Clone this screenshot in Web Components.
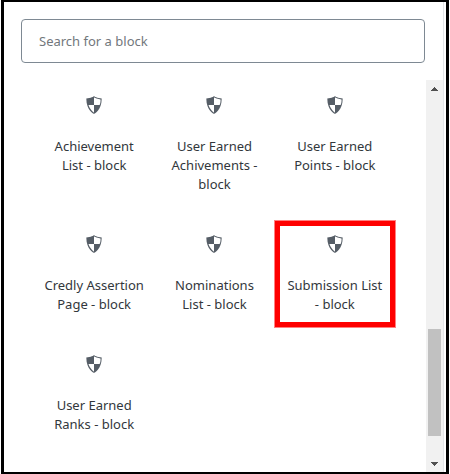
<!DOCTYPE html>
<html lang="en">
<head>
<meta charset="utf-8">
<title>Block inserter</title>
<style>
  html, body { height: 100%; margin: 0; }
  body { background: #fff; color: #32373c; font: 13px/19px "Noto Sans", "Open Sans", sans-serif; }
</style>
</head>
<body>
<inserter-panel>
  <block-search slot="search"></block-search>
  <block-item>Achievement<br>List - block</block-item>
  <block-item>User Earned<br>Achivements -<br>block</block-item>
  <block-item>User Earned<br>Points - block</block-item>
  <block-item>Credly Assertion<br>Page - block</block-item>
  <block-item>Nominations<br>List - block</block-item>
  <block-item marked>Submission List<br>- block</block-item>
  <block-item>User Earned<br>Ranks - block</block-item>
</inserter-panel>
<script>
class BaseElement extends HTMLElement {
  constructor() {
    super();
    this.attachShadow({ mode: "open" }).innerHTML = this.constructor.markup;
  }
}

customElements.define("inserter-panel", class extends BaseElement {
  static markup = `
    <style>
      :host { display: flex; flex-direction: column; box-sizing: border-box; height: 100%;
        margin: 0 1px; border: solid #000; border-width: 2px 3px; background: #fff; }
      .inner { flex: 1; min-height: 0; display: flex; flex-direction: column; margin-right: 2px; border-right: 1px solid #e2e4e7; }
      .search { padding: 17px 18px 17px 17px; }
      .body { flex: 1; min-height: 0; display: flex; }
      .grid { flex: 1; display: grid; grid-template-columns: repeat(3, 1fr); align-content: start; align-items: start;
        row-gap: 14px; padding: 2px 31px 0 30px; }
    </style>
    <div class="inner">
      <div class="search"><slot name="search"></slot></div>
      <div class="body">
        <div class="grid"><slot></slot></div>
        <scroll-track></scroll-track>
      </div>
    </div>`;
});

customElements.define("block-search", class extends BaseElement {
  static markup = `
    <style>
      :host { display: block; }
      input { display: block; box-sizing: border-box; width: 100%; height: 44px; margin: 0; padding: 0 17px;
        border: 1px solid #7e8993; border-radius: 4px; background: #fff; color: inherit; font: inherit; outline: none; }
      input::placeholder { color: #72777c; opacity: 1; }
    </style>
    <input type="text" placeholder="Search for a block" aria-label="Search for a block">`;
});

customElements.define("block-item", class extends BaseElement {
  static markup = `
    <style>
      :host { display: block; }
      button { display: flex; flex-direction: column; align-items: center; gap: 21px; box-sizing: border-box; width: 100%;
        margin: 0; padding: 12px 0 13px; border: 0; background: none; color: inherit; font: inherit; text-align: center; white-space: nowrap; }
      :host([marked]) button { box-shadow: inset 0 0 0 5px #f00, 0 0 0 1px #ff8080; }
      svg { display: block; width: 22px; height: 22px; fill: #555d66; }
    </style>
    <button type="button">
      <svg viewBox="0 0 20 20" aria-hidden="true"><path d="M10 2s3 2 7 2c0 11-7 14-7 14S3 15 3 4c4 0 7-2 7-2zm0 8h5s1-1 1-5c0 0-5-1-6-2v7H5c1 4 5 7 5 7v-7z"/></svg>
      <span><slot></slot></span>
    </button>`;
});

customElements.define("scroll-track", class extends BaseElement {
  static markup = `
    <style>
      :host { display: flex; flex-direction: column; width: 17px; background: #f1f1f1; }
      button { display: flex; align-items: center; justify-content: center; width: 17px; height: 17px; padding: 0; border: 0; background: none; }
      svg { display: block; width: 7px; height: 4px; fill: #505050; }
      .rail { flex: 1; display: flex; flex-direction: column; padding: 0 2px; }
      .before { flex: 232; }
      .thumb { flex: 107; background: #c1c1c1; }
      .after { flex: 19; }
    </style>
    <button type="button" aria-label="Scroll up"><svg viewBox="0 0 7 4"><path d="M3 0h1v1h1v1h1v1h1v1H0V3h1V2h1V1h1z"/></svg></button>
    <div class="rail"><div class="before"></div><div class="thumb"></div><div class="after"></div></div>
    <button type="button" aria-label="Scroll down"><svg viewBox="0 0 7 4"><path d="M0 0h7v1H6v1H5v1H4v1H3V3H2V2H1V1H0z"/></svg></button>`;
});
</script>
</body>
</html>
